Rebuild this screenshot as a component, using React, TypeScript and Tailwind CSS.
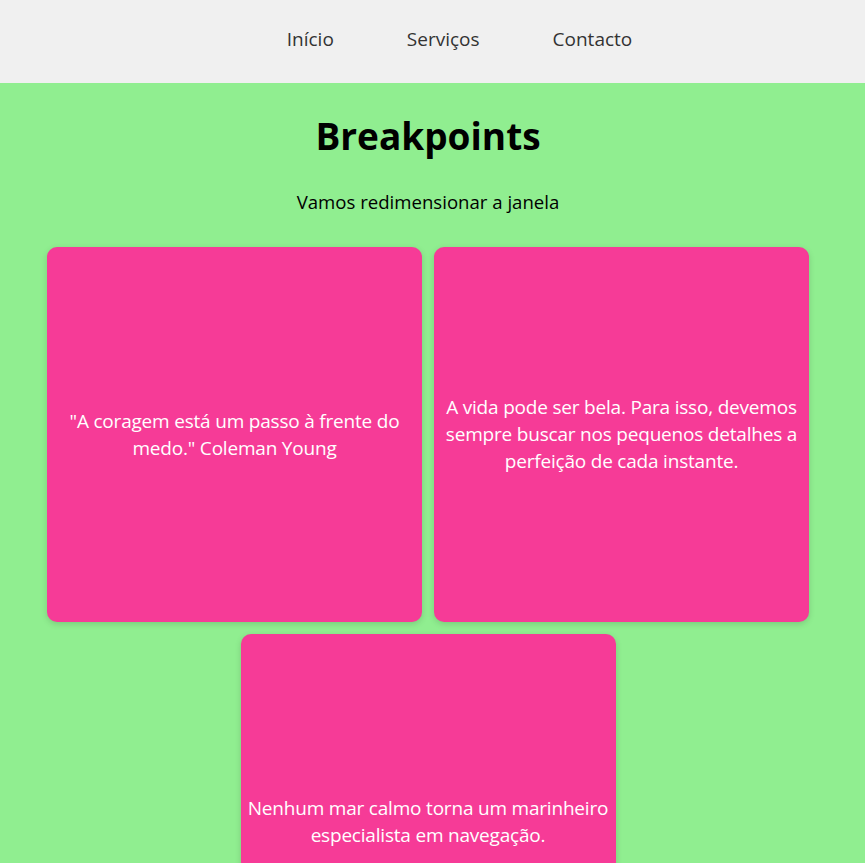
const cards = [
  '"A coragem está um passo à frente do medo." Coleman Young',
  "A vida pode ser bela. Para isso, devemos sempre buscar nos pequenos detalhes a perfeição de cada instante.",
  "Nenhum mar calmo torna um marinheiro especialista em navegação.",
];

export default function App() {
  return (
    <div className="min-h-[863px] bg-[#90ee90] font-['Open_Sans',sans-serif]">
      <nav className="flex h-[83px] items-center justify-center gap-[73px] bg-[#f0f0f0] pl-[54px] pb-[4px] text-[19px] text-[#333]">
        <a href="#">Início</a>
        <a href="#">Serviços</a>
        <a href="#">Contacto</a>
      </nav>
      <main className="pr-[9px]">
        <h1 className="mt-[26px] text-center text-[37px] font-bold leading-[54px] text-black">
          Breakpoints
        </h1>
        <p className="mt-[27px] text-center text-[18.6px] leading-[24px] text-black">
          Vamos redimensionar a janela
        </p>
        <div className="mt-[33px] flex flex-wrap justify-center gap-[12px]">
          {cards.map((text, i) => (
            <div
              key={i}
              className="flex h-[375px] w-[375px] items-center justify-center rounded-[10px] bg-[#f63b97] text-center text-[19px] leading-[27px] tracking-[-0.2px] text-white shadow-[0_2px_6px_rgba(0,0,0,0.15)]"
            >
              {text}
            </div>
          ))}
        </div>
      </main>
    </div>
  );
}
